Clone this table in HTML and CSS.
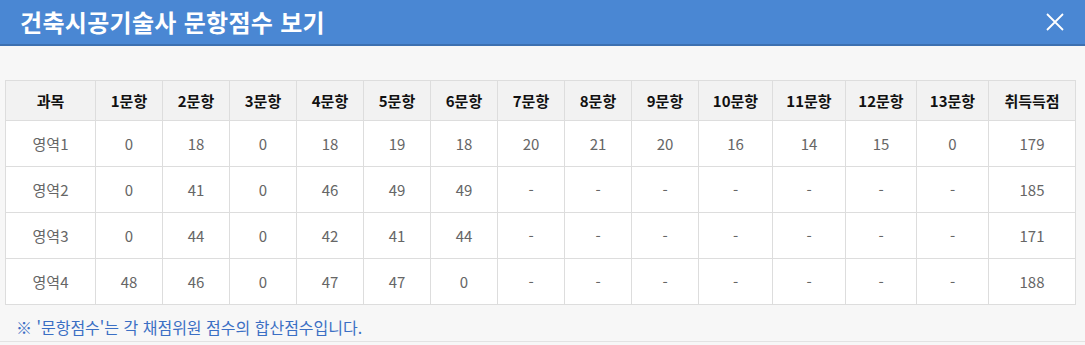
FILE: index.html
```html
<!DOCTYPE html>
<html lang="ko">
<head>
<meta charset="utf-8">
<title>건축시공기술사 문항점수 보기</title>
<link rel="stylesheet" href="styles.css">
</head>
<body>
<div class="modal">
  <header class="modal-head">
    <h1 class="modal-title">건축시공기술사 문항점수 보기</h1>
    <button class="close-btn" aria-label="닫기">
      <svg width="20" height="20" viewBox="0 0 20 20"><path d="M2 2 L18 18 M18 2 L2 18" stroke="#fff" stroke-width="1.8" fill="none"/></svg>
    </button>
  </header>
  <main class="modal-body">
    <table class="score-table">
      <colgroup>
        <col class="c-subj"><col class="c-q"><col class="c-q"><col class="c-q"><col class="c-q"><col class="c-q"><col class="c-q"><col class="c-q"><col class="c-q"><col class="c-q">
        <col class="c-q10"><col class="c-q11"><col class="c-q12"><col class="c-q13"><col class="c-total">
      </colgroup>
      <thead>
        <tr><th>과목</th><th>1문항</th><th>2문항</th><th>3문항</th><th>4문항</th><th>5문항</th><th>6문항</th><th>7문항</th><th>8문항</th><th>9문항</th><th>10문항</th><th>11문항</th><th>12문항</th><th>13문항</th><th>취득득점</th></tr>
      </thead>
      <tbody>
        <tr><td>영역1</td><td>0</td><td>18</td><td>0</td><td>18</td><td>19</td><td>18</td><td>20</td><td>21</td><td>20</td><td>16</td><td>14</td><td>15</td><td>0</td><td>179</td></tr>
        <tr><td>영역2</td><td>0</td><td>41</td><td>0</td><td>46</td><td>49</td><td>49</td><td>-</td><td>-</td><td>-</td><td>-</td><td>-</td><td>-</td><td>-</td><td>185</td></tr>
        <tr><td>영역3</td><td>0</td><td>44</td><td>0</td><td>42</td><td>41</td><td>44</td><td>-</td><td>-</td><td>-</td><td>-</td><td>-</td><td>-</td><td>-</td><td>171</td></tr>
        <tr><td>영역4</td><td>48</td><td>46</td><td>0</td><td>47</td><td>47</td><td>0</td><td>-</td><td>-</td><td>-</td><td>-</td><td>-</td><td>-</td><td>-</td><td>188</td></tr>
      </tbody>
    </table>
    <p class="note">※ '문항점수'는 각 채점위원 점수의 합산점수입니다.</p>
  </main>
</div>
</body>
</html>
```
FILE: styles.css
```css
html, body {
  margin: 0;
  padding: 0;
}
body {
  background: #f7f7f7;
  font-family: "Noto Sans CJK KR", "Noto Sans", sans-serif;
}
.modal {
  width: 1085px;
  height: 345px;
  overflow: hidden;
}
.modal-head {
  height: 46px;
  background: #4a87d3;
  border-bottom: 2px solid #3d70b0;
  display: flex;
  align-items: center;
  justify-content: space-between;
  padding: 0 20px 0 20px;
  box-sizing: border-box;
}
.modal-title {
  margin: 0;
  color: #fff;
  font-size: 24px;
  font-weight: 700;
  letter-spacing: 0.3px;
  line-height: 1;
}
.close-btn {
  background: none;
  border: 0;
  padding: 0;
  width: 20px;
  height: 20px;
  display: flex;
  cursor: pointer;
}
.modal-body {
  padding: 34px 10px 0 5px;
  border-bottom: 1px solid #e3e3e3;
  height: 296px;
  box-sizing: border-box;
}
.score-table {
  border-collapse: collapse;
  background: #fff;
  table-layout: fixed;
  width: 1070px;
}
.c-subj { width: 90px; }
.c-q { width: 67px; }
.c-q10 { width: 74px; }
.c-q11 { width: 73px; }
.c-q12 { width: 71px; }
.c-q13 { width: 72px; }
.c-total { width: 87px; }
.score-table th,
.score-table td {
  border: 1px solid #dddddd;
  text-align: center;
  padding: 0;
}
.score-table th {
  height: 39px;
  background: #f2f2f2;
  color: #111;
  font-size: 15px;
  font-weight: 700;
}
.score-table td {
  height: 45px;
  color: #666;
  font-size: 15px;
  font-weight: 400;
}
.note {
  margin: 10px 0 0 11px;
  color: #3b6fc4;
  font-size: 16px;
}
```
